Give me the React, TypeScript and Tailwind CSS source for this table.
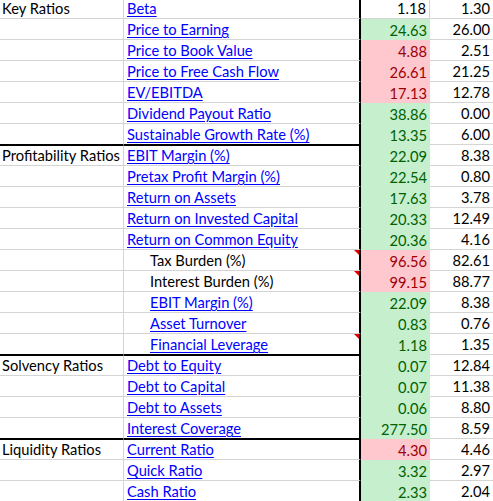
type Fill = "g" | "r" | null;

type Row = {
  cat?: string;
  label: string;
  link?: boolean;
  indent?: boolean;
  note?: boolean;
  value: string;
  bench: string;
  fill: Fill;
  sep?: boolean;
  top?: boolean;
};

const rows: Row[] = [
  { cat: "Key Ratios", label: "Beta", link: true, value: "1.18", bench: "1.30", fill: null },
  { label: "Price to Earning", link: true, value: "24.63", bench: "26.00", fill: "g" },
  { label: "Price to Book Value", link: true, value: "4.88", bench: "2.51", fill: "r" },
  { label: "Price to Free Cash Flow", link: true, value: "26.61", bench: "21.25", fill: "r" },
  { label: "EV/EBITDA", link: true, value: "17.13", bench: "12.78", fill: "r" },
  { label: "Dividend Payout Ratio", link: true, value: "38.86", bench: "0.00", fill: "g" },
  { label: "Sustainable Growth Rate (%)", link: true, value: "13.35", bench: "6.00", fill: "g", sep: true },
  { cat: "Profitability Ratios", label: "EBIT Margin (%)", link: true, value: "22.09", bench: "8.38", fill: "g", top: true },
  { label: "Pretax Profit Margin (%)", link: true, value: "22.54", bench: "0.80", fill: "g" },
  { label: "Return on Assets", link: true, value: "17.63", bench: "3.78", fill: "g" },
  { label: "Return on Invested Capital", link: true, value: "20.33", bench: "12.49", fill: "g" },
  { label: "Return on Common Equity", link: true, value: "20.36", bench: "4.16", fill: "g" },
  { label: "Tax Burden (%)", indent: true, note: true, value: "96.56", bench: "82.61", fill: "r" },
  { label: "Interest Burden (%)", indent: true, note: true, value: "99.15", bench: "88.77", fill: "r" },
  { label: "EBIT Margin (%)", link: true, indent: true, value: "22.09", bench: "8.38", fill: "g" },
  { label: "Asset Turnover", link: true, indent: true, value: "0.83", bench: "0.76", fill: "g" },
  { label: "Financial Leverage", link: true, indent: true, note: true, value: "1.18", bench: "1.35", fill: "g", sep: true },
  { cat: "Solvency Ratios", label: "Debt to Equity", link: true, value: "0.07", bench: "12.84", fill: "g", top: true },
  { label: "Debt to Capital", link: true, value: "0.07", bench: "11.38", fill: "g" },
  { label: "Debt to Assets", link: true, value: "0.06", bench: "8.80", fill: "g" },
  { label: "Interest Coverage", link: true, value: "277.50", bench: "8.59", fill: "g", sep: true },
  { cat: "Liquidity Ratios", label: "Current Ratio", link: true, value: "4.30", bench: "4.46", fill: "r", top: true },
  { label: "Quick Ratio", link: true, value: "3.32", bench: "2.97", fill: "g" },
  { label: "Cash Ratio", link: true, value: "2.33", bench: "2.04", fill: "g" },
];

function valueCell(fill: Fill) {
  if (fill === "g") return "w-[69px] bg-[#c6efce] text-[#006100]";
  if (fill === "r") return "w-[69px] bg-[#ffc7ce] text-[#9c0006]";
  return "w-[69px] bg-white text-black border-r border-b border-[#d4d4d4]";
}

export default function App() {
  return (
    <div className="w-[493px] h-[501px] overflow-hidden bg-white text-[14.7px] leading-[16px] text-black font-['Lato',sans-serif]">
      <div className="-mt-[2px]">
        {rows.map((r, i) => (
          <div key={i} className="flex h-[21px]">
            <div
              className={
                "w-[124px] shrink-0 flex items-end pb-[2px] pl-[2px] border-r border-r-[#d4d4d4] border-b whitespace-nowrap " +
                (r.sep ? "border-b-black " : "border-b-[#d4d4d4] ") +
                (r.top ? "border-t border-t-black" : "")
              }
            >
              {r.cat}
            </div>
            <div
              className={
                "relative w-[237px] shrink-0 flex items-end pb-[2px] border-r-2 border-r-black border-b whitespace-nowrap " +
                (r.indent ? "pl-[26px] " : "pl-[3px] ") +
                (r.sep ? "border-b-black " : "border-b-[#d4d4d4] ") +
                (r.top ? "border-t border-t-black" : "")
              }
            >
              {r.link ? (
                <a href="#" className="text-[#0000ff] underline underline-offset-[2px]">
                  {r.label}
                </a>
              ) : (
                <span>{r.label}</span>
              )}
              {r.note && (
                <span className="absolute top-0 right-0 w-0 h-0 border-l-[5px] border-l-transparent border-t-[5px] border-t-[#e00000]" />
              )}
            </div>
            <div className={"shrink-0 flex items-end justify-end pb-[2px] pr-[3px] " + valueCell(r.fill)}>
              {r.value}
            </div>
            <div className="flex-1 flex items-end justify-end pb-[2px] pr-[3px] border-b border-[#d4d4d4]">
              {r.bench}
            </div>
          </div>
        ))}
      </div>
    </div>
  );
}
